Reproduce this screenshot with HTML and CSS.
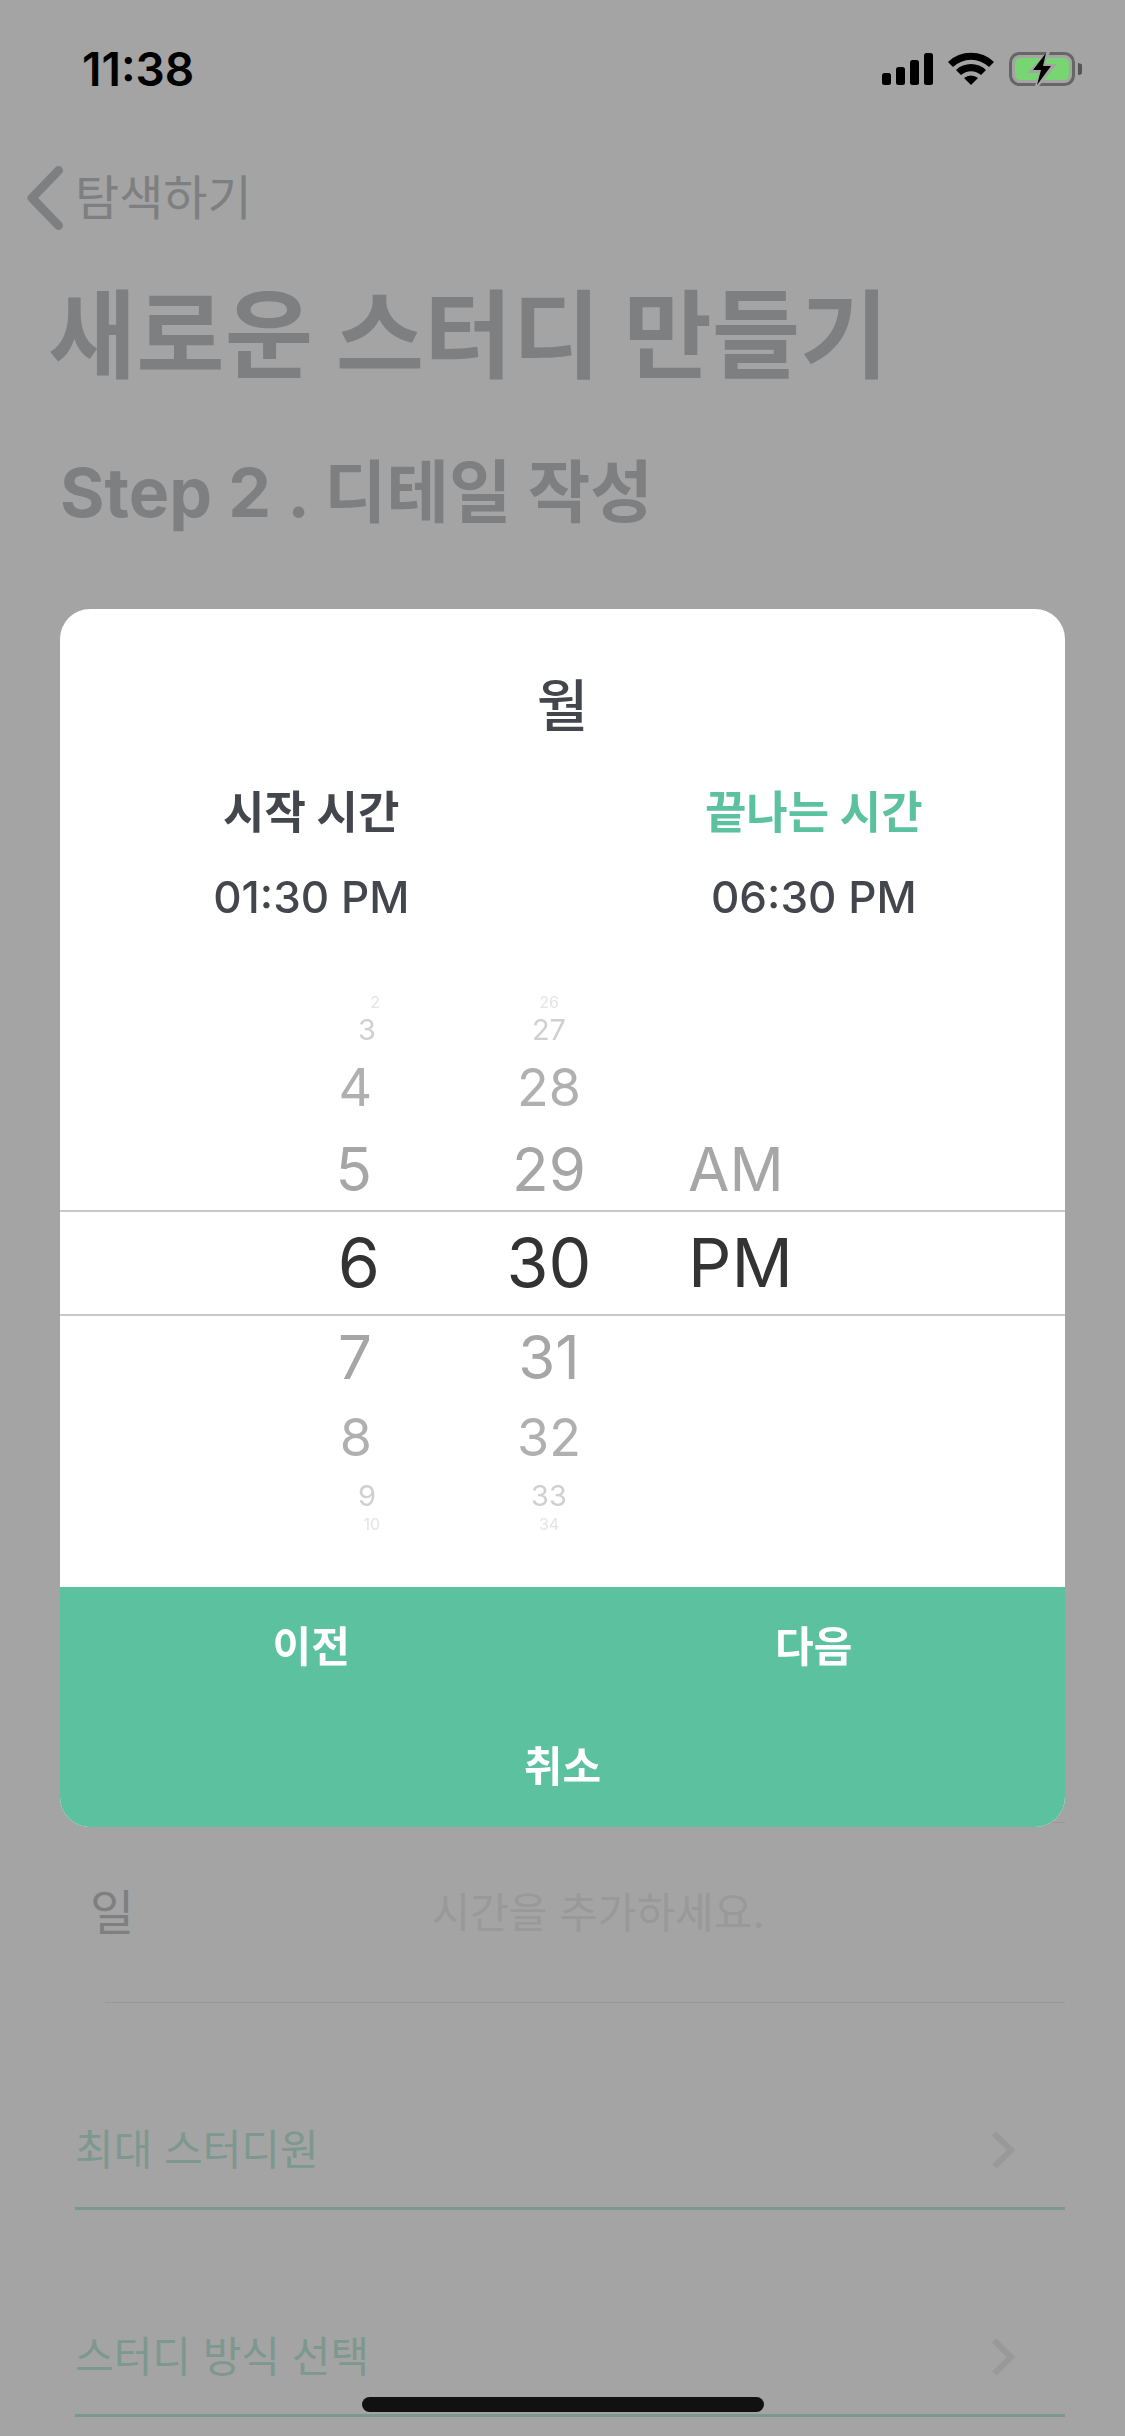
FILE: index.html
```html
<!DOCTYPE html>
<html lang="ko">
<head>
<meta charset="utf-8">
<meta name="viewport" content="width=device-width, initial-scale=1">
<title>새로운 스터디 만들기</title>
<link rel="stylesheet" href="styles.css">
</head>
<body>
<div class="screen">
  <header class="status">
    <time class="clock">11:38</time>
    <div class="indicators">
      <svg class="signal" width="51" height="34" viewBox="0 0 51 34" aria-hidden="true">
        <rect x="0" y="21" width="9" height="12" rx="2.5"/>
        <rect x="14" y="15" width="9" height="18" rx="2.5"/>
        <rect x="28" y="8" width="9" height="25" rx="2.5"/>
        <rect x="42" y="1" width="9" height="32" rx="2.5"/>
      </svg>
      <svg class="wifi" width="46" height="34" viewBox="0 0 46 34" aria-hidden="true">
        <path d="M0 10A33 33 0 0 1 46 10L41 15A26 26 0 0 0 5 15Z"/>
        <path d="M8 18A22 22 0 0 1 38 18L33 23A15 15 0 0 0 13 23Z"/>
        <path d="M16 26A11 11 0 0 1 30 26L23 33Z"/>
      </svg>
      <svg class="battery" width="73" height="34" viewBox="0 0 73 34" aria-hidden="true">
        <rect x="1.5" y="1.5" width="63" height="31" rx="9" fill="none" stroke="#666" stroke-width="3"/>
        <rect x="6" y="6" width="54" height="22" rx="5" fill="#78d672"/>
        <path d="M69 11a6 6 0 0 1 0 12Z" fill="#555"/>
        <path d="M38 0L18 21H30L26 34H30L48 12H36L41 0Z" fill="#a4a4a4"/>
        <path d="M37 1L24 18H32L28 33L42 14H34Z" fill="#000"/>
      </svg>
    </div>
  </header>

  <nav class="nav">
    <a class="back" href="#">
      <svg width="36" height="64" viewBox="0 0 36 64" aria-hidden="true"><path d="M31.500 4.500L5 32L31.500 59.500"/></svg>
      <span>탐색하기</span>
    </a>
  </nav>

  <main class="form">
    <h1 class="title">새로운 스터디 만들기</h1>
    <h2 class="step">Step 2 . 디테일 작성</h2>

    <section class="days">
      <hr class="rule">
      <div class="day">
        <label class="day-name" for="sunday">일</label>
        <input class="day-time" id="sunday" type="text" placeholder="시간을 추가하세요.">
      </div>
      <hr class="rule">
    </section>

    <section class="options">
      <button class="option" type="button">
        <span>최대 스터디원</span>
        <svg width="24" height="38" viewBox="0 0 24 38" aria-hidden="true"><path d="M2 2.500L19 19L2.500 35.500"/></svg>
      </button>
      <button class="option" type="button">
        <span>스터디 방식 선택</span>
        <svg width="24" height="38" viewBox="0 0 24 38" aria-hidden="true"><path d="M2 2.500L19 19L2.500 35.500"/></svg>
      </button>
    </section>
  </main>
</div>

<div class="overlay">
  <div class="modal" role="dialog" aria-labelledby="modal-day">
    <h3 class="modal-day" id="modal-day">월</h3>
    <div class="range">
      <button class="slot" type="button">
        <span class="slot-label">시작 시간</span>
        <span class="slot-time">01:30 PM</span>
      </button>
      <button class="slot slot-active" type="button">
        <span class="slot-label">끝나는 시간</span>
        <span class="slot-time">06:30 PM</span>
      </button>
    </div>

    <div class="wheel">
      <ul class="reel hours" role="listbox" aria-label="시">
        <li class="far">2</li>
        <li class="mid">3</li>
        <li class="near">4</li>
        <li class="next">5</li>
        <li class="now" role="option" aria-selected="true">6</li>
        <li class="next">7</li>
        <li class="near">8</li>
        <li class="mid">9</li>
        <li class="far">10</li>
      </ul>
      <ul class="reel minutes" role="listbox" aria-label="분">
        <li class="far">26</li>
        <li class="mid">27</li>
        <li class="near">28</li>
        <li class="next">29</li>
        <li class="now" role="option" aria-selected="true">30</li>
        <li class="next">31</li>
        <li class="near">32</li>
        <li class="mid">33</li>
        <li class="far">34</li>
      </ul>
      <ul class="reel period" role="listbox" aria-label="오전 오후">
        <li class="far"></li>
        <li class="mid"></li>
        <li class="near"></li>
        <li class="next">AM</li>
        <li class="now" role="option" aria-selected="true">PM</li>
      </ul>
    </div>

    <div class="actions">
      <button class="action" type="button">이전</button>
      <button class="action" type="button">다음</button>
      <button class="action action-wide" type="button">취소</button>
    </div>
  </div>
</div>

<div class="home-bar"></div>
</body>
</html>
```

FILE: styles.css
```css
:root {
  --dim: #a4a4a4;
  --dim-text: #7e7f80;
  --dim-faint: #999999;
  --dim-green: #7d988e;
  --green: #5cc19f;
  --ink: #44464d;
}

* {
  box-sizing: border-box;
}

body {
  margin: 0;
  background: var(--dim);
  font-family: Inter, "Noto Sans CJK KR", sans-serif;
}

button {
  padding: 0;
  border: 0;
  background: none;
  color: inherit;
  font: inherit;
}

.screen {
  min-height: 100vh;
  overflow: hidden;
  color: var(--dim-text);
}

/* Status bar */
.status {
  display: flex;
  align-items: center;
  justify-content: space-between;
  height: 138px;
  padding: 0 43px 0 82px;
  color: #000;
}

.clock {
  font-size: 46px;
  font-weight: 600;
}

.indicators {
  display: flex;
  gap: 15px;
}

/* Navigation */
.nav {
  display: flex;
  align-items: center;
  height: 120px;
  padding-left: 27px;
}

.back {
  display: flex;
  align-items: center;
  gap: 12px;
  color: inherit;
  font-size: 48px;
  line-height: 64px;
  text-decoration: none;
}

.back path {
  fill: none;
  stroke: currentColor;
  stroke-width: 9;
  stroke-linecap: round;
  stroke-linejoin: round;
}

/* Form behind the dialog */
.title {
  margin: 0;
  padding-left: 48px;
  font-size: 96px;
  font-weight: 700;
  line-height: 154px;
}

.step {
  margin: 0;
  padding-left: 60px;
  font-size: 68px;
  font-weight: 700;
  line-height: 160px;
}

.days {
  margin-top: 1250px;
}

.rule {
  height: 1px;
  margin: 0 60px 0 105px;
  border: 0;
  background: #989898;
}

.day {
  display: grid;
  grid-template-columns: 105px 1fr;
  align-items: center;
  height: 179px;
  padding: 0 60px 0 90px;
}

.day-name {
  font-size: 48px;
  line-height: 64px;
}

.day-time {
  width: 100%;
  padding: 0 64px 0 0;
  border: 0;
  outline: 0;
  background: none;
  color: inherit;
  font: inherit;
  font-size: 42px;
  text-align: center;
}

.day-time::placeholder {
  color: var(--dim-faint);
  opacity: 1;
}

.options {
  padding: 87px 60px 0 75px;
}

.option {
  display: flex;
  align-items: center;
  justify-content: space-between;
  width: 100%;
  height: 120px;
  margin-bottom: 87px;
  padding: 2px 49px 0 0;
  border-bottom: 3px solid var(--dim-green);
  color: var(--dim-green);
  font-size: 42px;
  line-height: 64px;
}

.option:last-child {
  margin-bottom: 0;
}

.option path {
  fill: none;
  stroke: var(--dim-faint);
  stroke-width: 6;
}

/* Dialog */
.overlay {
  position: fixed;
  inset: 0;
  display: flex;
  align-items: center;
  padding: 0 60px;
}

.modal {
  flex: 1;
  overflow: hidden;
  border-radius: 30px;
  background: #fff;
  color: var(--ink);
}

.modal-day {
  margin: 0;
  padding-top: 52px;
  font-size: 56px;
  font-weight: 500;
  line-height: 90px;
  text-align: center;
}

.range {
  display: grid;
  grid-template-columns: 1fr 1fr;
  padding: 20px 0 53px;
}

.slot {
  display: flex;
  flex-direction: column;
  align-items: center;
}

.slot-label {
  font-size: 45px;
  font-weight: 700;
  line-height: 84px;
}

.slot-time {
  font-size: 44px;
  font-weight: 500;
  line-height: 84px;
}

.slot-active .slot-label {
  color: var(--green);
}

/* Time wheel */
.wheel {
  display: grid;
  grid-template-columns: 320fr 308fr 377fr;
  padding-bottom: 53px;
  color: #a6a6a6;
}

.reel {
  margin: 0;
  padding: 0;
  list-style: none;
}

.hours {
  text-align: right;
}

.hours .mid {
  padding-right: 4px;
}

.hours .near,
.hours .next {
  padding-right: 8px;
}

.minutes {
  text-align: center;
}

.minutes li {
  padding-left: 30px;
}

.far {
  height: 20px;
  color: #e4e4e4;
  font-size: 16px;
  line-height: 20px;
}

.mid {
  height: 36px;
  color: #d0d0d0;
  font-size: 29px;
  line-height: 36px;
}

.near {
  height: 80px;
  color: #b0b0b0;
  font-size: 52px;
  line-height: 80px;
}

.next {
  height: 82px;
  font-size: 60px;
  line-height: 82px;
}

.now {
  height: 106px;
  border-top: 2px solid #c9c9c9;
  border-bottom: 2px solid #c9c9c9;
  color: #333;
  font-size: 68px;
  line-height: 100px;
}

/* Dialog buttons */
.actions {
  display: grid;
  grid-template-columns: 1fr 1fr;
  background: var(--green);
  color: #fff;
}

.action {
  height: 120px;
  font-size: 42px;
  font-weight: 700;
  line-height: 120px;
}

.action-wide {
  grid-column: 1 / -1;
}

.home-bar {
  position: fixed;
  bottom: 24px;
  left: 50%;
  width: 402px;
  height: 15px;
  margin-left: -201px;
  border-radius: 8px;
  background: #111;
}
```
